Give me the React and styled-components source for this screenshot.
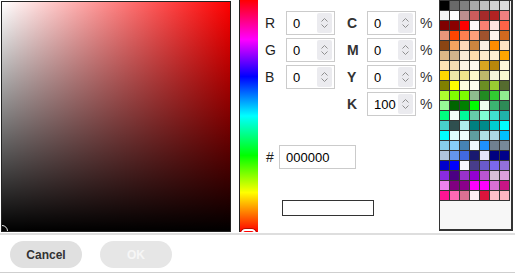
import React from 'react';
import styled, { createGlobalStyle } from 'styled-components';

const Global = createGlobalStyle`
  html, body { margin: 0; padding: 0; background: #fff; }
  body { font-family: "Liberation Sans", Arial, sans-serif; }
  *, *::before, *::after { box-sizing: border-box; }
`;

const PALETTE = [
  ['#000000', '#696969', '#808080', '#a9a9a9', '#c0c0c0', '#d3d3d3', '#dcdcdc'],
  ['#f5f5f5', '#ffffff', '#bc8f8f', '#cd5c5c', '#a52a2a', '#b22222', '#f08080'],
  ['#800000', '#8b0000', '#ff0000', '#fffafa', '#fa8072', '#ffe4e1', '#ff6347'],
  ['#e9967a', '#ff4500', '#ff7f50', '#ffa07a', '#a0522d', '#fff5ee', '#d2691e'],
  ['#8b4513', '#f4a460', '#ffdab9', '#cd853f', '#faf0e6', '#ff8c00', '#ffe4c4'],
  ['#deb887', '#d2b48c', '#faebd7', '#ffdead', '#ffebcd', '#ffefd5', '#ffa500'],
  ['#ffe4b5', '#f5deb3', '#fdf5e6', '#fffaf0', '#daa520', '#b8860b', '#fff8dc'],
  ['#ffd700', '#eee8aa', '#f0e68c', '#fffacd', '#bdb76b', '#f5f5dc', '#fafad2'],
  ['#808000', '#ffff00', '#ffffe0', '#fffff0', '#6b8e23', '#9acd32', '#556b2f'],
  ['#adff2f', '#7fff00', '#7cfc00', '#8fbc8f', '#228b22', '#32cd32', '#90ee90'],
  ['#98fb98', '#006400', '#008000', '#00ff00', '#f0fff0', '#3cb371', '#2e8b57'],
  ['#00ff7f', '#f5fffa', '#00fa9a', '#66cdaa', '#7fffd4', '#40e0d0', '#20b2aa'],
  ['#48d1cc', '#2f4f4f', '#afeeee', '#008080', '#008b8b', '#00ced1', '#00ffff'],
  ['#00ffff', '#e0ffff', '#f0ffff', '#5f9ea0', '#b0e0e6', '#add8e6', '#00bfff'],
  ['#87ceeb', '#87cefa', '#4682b4', '#f0f8ff', '#1e90ff', '#708090', '#778899'],
  ['#b0c4de', '#6495ed', '#4169e1', '#191970', '#e6e6fa', '#000080', '#00008b'],
  ['#0000cd', '#0000ff', '#f8f8ff', '#483d8b', '#6a5acd', '#7b68ee', '#9370db'],
  ['#8a2be2', '#4b0082', '#9932cc', '#9400d3', '#ba55d3', '#d8bfd8', '#dda0dd'],
  ['#ee82ee', '#800080', '#8b008b', '#ff00ff', '#ff00ff', '#da70d6', '#c71585'],
  ['#ff1493', '#ff69b4', '#db7093', '#fff0f5', '#dc143c', '#ffc0cb', '#ffb6c1'],
];

const Dialog = styled.div`
  width: 515px;
  height: 275px;
  display: flex;
  flex-direction: column;
  background: #fff;
`;

const Top = styled.div`
  display: flex;
  align-items: flex-start;
  height: 233px;
`;

const SatVal = styled.div`
  position: relative;
  margin: 1px 0 0 1px;
  width: 230px;
  height: 231px;
  border: 1px solid #222;
  overflow: hidden;
  background:
    linear-gradient(to top, #000, rgba(0, 0, 0, 0)),
    linear-gradient(to right, #fff, #f00);
`;

const SatCursor = styled.div`
  position: absolute;
  left: -6px;
  bottom: -6px;
  width: 12px;
  height: 12px;
  border-radius: 50%;
  border: 1px solid #e8e8e8;
  box-shadow: 0 0 0 1px rgba(0, 0, 0, 0.4);
`;

const Hue = styled.div`
  position: relative;
  margin-left: 8px;
  width: 19px;
  height: 232px;
  border-left: 1px solid #222;
  overflow: hidden;
  background: linear-gradient(
    to bottom,
    #f00 0%,
    #f0f 17%,
    #00f 33%,
    #0ff 50%,
    #0f0 67%,
    #ff0 83%,
    #f00 100%
  );
`;

const HueThumb = styled.div`
  position: absolute;
  left: 1px;
  right: 2px;
  bottom: -6px;
  height: 9px;
  border: 2px solid #fff;
  border-radius: 5px;
  box-shadow: 0 0 0 1px rgba(0, 0, 0, 0.3);
`;

const Fields = styled.div`
  flex: 1;
  margin-left: 7px;
  padding-top: 11px;
  display: flex;
  flex-direction: column;
`;

const Grid = styled.div`
  display: grid;
  grid-template-columns: 21px 49px 12px 20px 49px 4px 12px;
  grid-auto-rows: 24px;
  row-gap: 3px;
  align-items: center;
`;

const Label = styled.span`
  grid-column: ${(p) => p.$col};
  font-size: 14px;
  font-weight: ${(p) => (p.$bold ? 700 : 400)};
  color: ${(p) => (p.$bold ? '#333' : '#1f1f1f')};
  line-height: 1;
`;

const Percent = styled.span`
  grid-column: 7;
  font-size: 14px;
  color: #333;
  line-height: 1;
`;

const NumField = styled.div`
  grid-column: ${(p) => p.$col};
  height: 24px;
  border: 1px solid #cbcbcb;
  display: flex;
  align-items: center;
  justify-content: space-between;
  padding: 0 2px 0 6px;
  font-size: 13px;
  color: #000;
  background: #fff;
`;

const Spinner = styled.span`
  display: block;
  width: 15px;
  height: 20px;
  background: #ebebef;
  border-radius: 2px;
`;

const SpinIcon = () => (
  <Spinner>
    <svg width="15" height="20" viewBox="0 0 15 20">
      <path d="M4.5 8.5 L7.5 5.5 L10.5 8.5" fill="none" stroke="#8f8f8f" strokeWidth="1" />
      <path d="M4.5 11.5 L7.5 14.5 L10.5 11.5" fill="none" stroke="#8f8f8f" strokeWidth="1" />
    </svg>
  </Spinner>
);

const HexRow = styled.div`
  display: flex;
  align-items: center;
  margin-top: 29px;
  padding-left: 1px;
`;

const HexLabel = styled.span`
  width: 13px;
  font-size: 14px;
  color: #1f1f1f;
`;

const HexField = styled.div`
  width: 77px;
  height: 24px;
  border: 1px solid #cbcbcb;
  padding-left: 6px;
  display: flex;
  align-items: center;
  font-size: 13px;
  color: #000;
`;

const Preview = styled.div`
  margin: 31px 0 0 17px;
  width: 92px;
  height: 16px;
  border: 1px solid #333;
  background: ${(p) => p.$color};
`;

const Palette = styled.div`
  width: 74px;
  height: 231px;
  margin-right: 2px;
  border: solid #333;
  border-width: 1px 2px 2px 1px;
  background: #f7f7f7;
`;

const SwatchGrid = styled.div`
  display: grid;
  grid-template-columns: repeat(7, 10px);
  grid-auto-rows: 10px;
`;

const Swatch = styled.div`
  background: ${(p) => p.$color};
  border-right: 1px solid #333;
  border-bottom: 1px solid #333;
`;

const Footer = styled.div`
  display: flex;
  gap: 18px;
  height: 40px;
  padding: 6px 10px 0;
  border-top: 2px solid #dedede;
  border-bottom: 1px solid #cfcfcf;
`;

const Button = styled.button`
  width: 72px;
  height: 27px;
  border: none;
  border-radius: 14px;
  background: ${(p) => (p.$disabled ? '#e6e6e6' : '#e0e0e0')};
  color: ${(p) => (p.$disabled ? '#f6f6f6' : '#333')};
  font-family: "Liberation Sans", Arial, sans-serif;
  font-size: 12px;
  font-weight: 700;
  padding: 0;
  cursor: ${(p) => (p.$disabled ? 'default' : 'pointer')};
`;

const rows = [
  { l: 'R', v: '0', r: 'C', rv: '0' },
  { l: 'G', v: '0', r: 'M', rv: '0' },
  { l: 'B', v: '0', r: 'Y', rv: '0' },
  { l: null, r: 'K', rv: '100' },
];

export default function App() {
  return (
    <>
      <Global />
      <Dialog>
        <Top>
          <SatVal>
            <SatCursor />
          </SatVal>
          <Hue>
            <HueThumb />
          </Hue>
          <Fields>
            <Grid>
              {rows.map((row) => (
                <React.Fragment key={row.r}>
                  {row.l && <Label $col={1}>{row.l}</Label>}
                  {row.l && (
                    <NumField $col={2}>
                      <span>{row.v}</span>
                      <SpinIcon />
                    </NumField>
                  )}
                  <Label $col={4} $bold>{row.r}</Label>
                  <NumField $col={5}>
                    <span>{row.rv}</span>
                    <SpinIcon />
                  </NumField>
                  <Percent>%</Percent>
                </React.Fragment>
              ))}
            </Grid>
            <HexRow>
              <HexLabel>#</HexLabel>
              <HexField>000000</HexField>
            </HexRow>
            <Preview $color="#fff" />
          </Fields>
          <Palette>
            <SwatchGrid>
              {PALETTE.flat().map((c, i) => (
                <Swatch key={i} $color={c} />
              ))}
            </SwatchGrid>
          </Palette>
        </Top>
        <Footer>
          <Button>Cancel</Button>
          <Button $disabled disabled>OK</Button>
        </Footer>
      </Dialog>
    </>
  );
}
